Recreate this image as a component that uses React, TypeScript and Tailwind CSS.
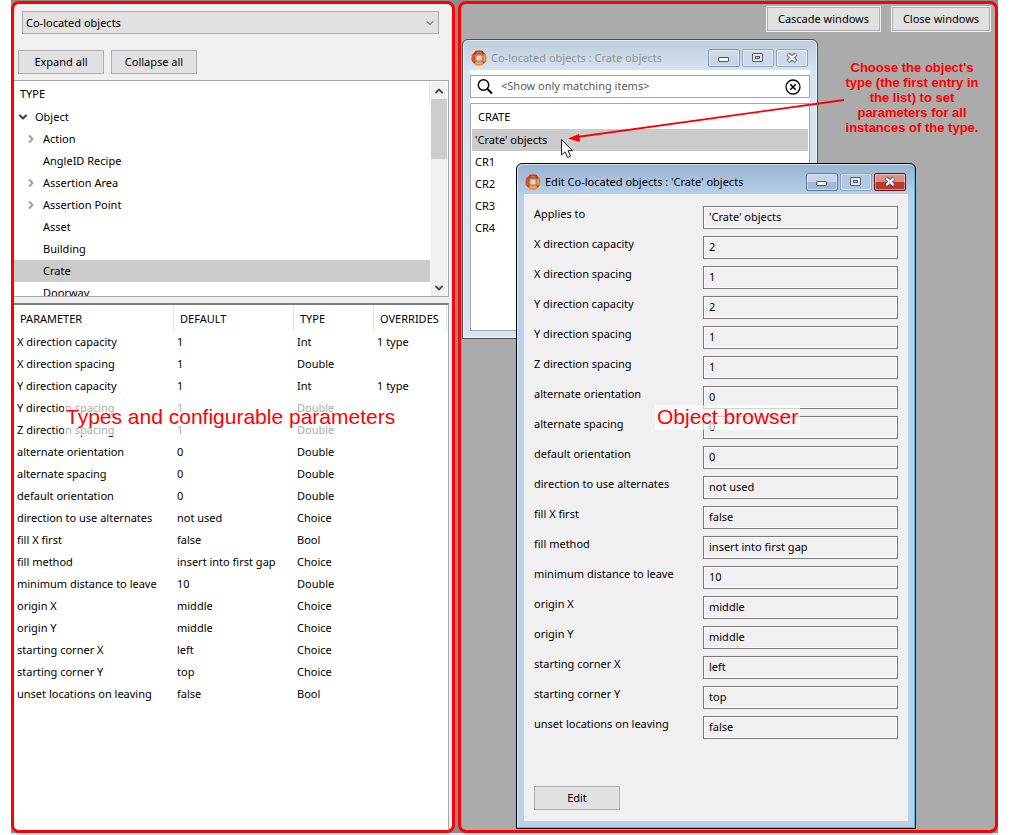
import React from 'react';
import { ChevronDown, ChevronRight, ChevronUp } from 'lucide-react';

interface TreeNode {
  name: string;
  expandable?: boolean;
  selected?: boolean;
}

interface Parameter {
  name: string;
  value: string;
  type: string;
  overrides?: string;
}

interface Field {
  label: string;
  value: string;
}

const TREE: TreeNode[] = [
  { name: 'Action', expandable: true },
  { name: 'AngleID Recipe' },
  { name: 'Assertion Area', expandable: true },
  { name: 'Assertion Point', expandable: true },
  { name: 'Asset' },
  { name: 'Building' },
  { name: 'Crate', selected: true },
  { name: 'Doorway' },
];

const PARAMETERS: Parameter[] = [
  { name: 'X direction capacity', value: '1', type: 'Int', overrides: '1 type' },
  { name: 'X direction spacing', value: '1', type: 'Double' },
  { name: 'Y direction capacity', value: '1', type: 'Int', overrides: '1 type' },
  { name: 'Y direction spacing', value: '1', type: 'Double' },
  { name: 'Z direction spacing', value: '1', type: 'Double' },
  { name: 'alternate orientation', value: '0', type: 'Double' },
  { name: 'alternate spacing', value: '0', type: 'Double' },
  { name: 'default orientation', value: '0', type: 'Double' },
  { name: 'direction to use alternates', value: 'not used', type: 'Choice' },
  { name: 'fill X first', value: 'false', type: 'Bool' },
  { name: 'fill method', value: 'insert into first gap', type: 'Choice' },
  { name: 'minimum distance to leave', value: '10', type: 'Double' },
  { name: 'origin X', value: 'middle', type: 'Choice' },
  { name: 'origin Y', value: 'middle', type: 'Choice' },
  { name: 'starting corner X', value: 'left', type: 'Choice' },
  { name: 'starting corner Y', value: 'top', type: 'Choice' },
  { name: 'unset locations on leaving', value: 'false', type: 'Bool' },
];

const FIELDS: Field[] = [
  { label: 'Applies to', value: "'Crate' objects" },
  { label: 'X direction capacity', value: '2' },
  { label: 'X direction spacing', value: '1' },
  { label: 'Y direction capacity', value: '2' },
  { label: 'Y direction spacing', value: '1' },
  { label: 'Z direction spacing', value: '1' },
  { label: 'alternate orientation', value: '0' },
  { label: 'alternate spacing', value: '0' },
  { label: 'default orientation', value: '0' },
  { label: 'direction to use alternates', value: 'not used' },
  { label: 'fill X first', value: 'false' },
  { label: 'fill method', value: 'insert into first gap' },
  { label: 'minimum distance to leave', value: '10' },
  { label: 'origin X', value: 'middle' },
  { label: 'origin Y', value: 'middle' },
  { label: 'starting corner X', value: 'left' },
  { label: 'starting corner Y', value: 'top' },
  { label: 'unset locations on leaving', value: 'false' },
];

const CRATES = ["'Crate' objects", 'CR1', 'CR2', 'CR3', 'CR4'];

function AppLogo() {
  return (
    <svg viewBox="0 0 16 16" className="size-4 shrink-0" fill="none" strokeLinecap="round" aria-hidden="true">
      <circle cx="8" cy="8" r="6" stroke="#a8421c" strokeWidth="2.6" />
      <path d="M2.600 5.800V10.200" stroke="#e0501a" strokeWidth="3.800" />
      <path d="M13.400 5.800V10.200" stroke="#ee7426" strokeWidth="3.800" />
      <path d="M5.600 2.500H10.400" stroke="#cf3a16" strokeWidth="3.800" />
      <path d="M5.600 13.500H10.400" stroke="#f08a22" strokeWidth="3.800" />
      <path d="M6 2.900H10" stroke="#f2703a" strokeWidth="1.200" />
      <path d="M6 13.400H10" stroke="#ffc25a" strokeWidth="1.400" />
      <path d="M13.200 6.200V9.800" stroke="#ffa04a" strokeWidth="1.200" />
      <rect x="5" y="5" width="6" height="6" fill="#c9d9ea" stroke="#8f5236" strokeWidth="0.6" />
    </svg>
  );
}

function CaptionButtons({ active }: { active?: boolean }) {
  const base = 'flex h-[18px] w-8 items-center justify-center rounded-xs border shadow-[inset_0_0_0_1px_rgba(255,255,255,0.45)]';
  const plain = active
    ? 'border-[#5f7896] bg-linear-to-b from-[#c3d5e8] from-50% to-[#9fb9d6] to-50%'
    : 'border-[#8096b0] bg-linear-to-b from-[#cfdcea] to-[#c3d3e5]';
  const dim = active
    ? 'border-[#8ba4c0] bg-[#b0c8e1]'
    : 'border-[#93a7be] bg-[#cddaea]';
  const close = active
    ? 'border-[#5a1420] bg-linear-to-b from-[#dc9186] from-50% to-[#bb3a26] to-50%'
    : 'border-[#93a7be] bg-[#cddaea]';

  return (
    <div className="mr-[2px] flex gap-[2px]">
      <button type="button" aria-label="Minimize" className={`${base} ${plain}`}>
        <svg viewBox="0 0 12 12" className="size-3" aria-hidden="true">
          <rect x="0.5" y="5.5" width="10" height="4" rx="0.5" fill="#f4f6f8" stroke="#55565f" />
        </svg>
      </button>
      <button type="button" aria-label="Maximize" className={`${base} ${dim}`}>
        <svg viewBox="0 0 12 12" className="size-3" aria-hidden="true">
          <rect x="0.5" y="1.5" width="10" height="8" rx="0.5" fill="#e4e8ee" stroke="#5b5f72" />
          <rect x="3.5" y="4.5" width="4" height="2" fill="#c3d3e5" stroke="#5b5f72" />
        </svg>
      </button>
      <button type="button" aria-label="Close" className={`${base} ${close}`}>
        <svg viewBox="0 0 12 12" className="size-3" aria-hidden="true">
          <path d="M2 2L10 9.5M10 2L2 9.5" stroke="#50536a" strokeWidth="4.4" />
          <path d="M2.3 2.3L9.7 9.2M9.7 2.3L2.3 9.2" stroke="#f6f6f8" strokeWidth="2.4" />
        </svg>
      </button>
    </div>
  );
}

function TypeTree() {
  return (
    <div className="mr-[3px] flex h-[217px] shrink-0 gap-px border-y border-r border-[#a7a6aa] bg-white pt-px pr-px">
      <div className="flex-1 overflow-hidden">
        <div className="flex h-6 items-center border-r border-[#e5e5e5] px-[6px]">TYPE</div>
        <ul>
          <li className="flex h-[22px] items-center gap-[6px] pl-[3px]">
            <ChevronDown className="size-3 text-[#404040]" strokeWidth={4} />
            Object
          </li>
          {TREE.map((node) => (
            <li
              key={node.name}
              className={`flex h-[22px] items-center gap-[6px] pl-[11px] ${node.selected ? 'bg-[#cbcbcb]' : ''}`}
            >
              {node.expandable ? (
                <ChevronRight className="size-3 text-[#a0a0a0]" strokeWidth={4} />
              ) : (
                <span className="w-3" />
              )}
              {node.name}
            </li>
          ))}
        </ul>
      </div>
      <div className="flex w-4 flex-col items-center bg-[#f0f0f0] text-[#505050]">
        <div className="flex h-[17px] items-center">
          <ChevronUp className="size-3" strokeWidth={4} />
        </div>
        <div className="h-[60px] w-full bg-[#cdcdcd]" />
        <div className="mt-auto flex h-[17px] items-center">
          <ChevronDown className="size-3" strokeWidth={4} />
        </div>
      </div>
    </div>
  );
}

function ParameterTable() {
  return (
    <div className="mt-[6px] mr-[3px] flex-1 border-t-2 border-r border-t-[#7c7c7c] border-r-[#a7a6aa] bg-white pt-px">
      <table className="w-[433px] table-fixed border-separate border-spacing-0 text-left">
        <colgroup>
          <col className="w-[160px]" />
          <col className="w-[120px]" />
          <col className="w-[80px]" />
          <col className="w-[73px]" />
        </colgroup>
        <thead>
          <tr className="h-[25px]">
            {['PARAMETER', 'DEFAULT', 'TYPE', 'OVERRIDES'].map((title) => (
              <th key={title} className="border-r border-[#e5e5e5] pl-[6px] font-normal">
                {title}
              </th>
            ))}
          </tr>
        </thead>
        <tbody>
          {PARAMETERS.map((p) => (
            <tr key={p.name} className="h-[22px] whitespace-nowrap">
              <td className="pl-[3px]">{p.name}</td>
              <td className="pl-[3px]">{p.value}</td>
              <td className="pl-[3px]">{p.type}</td>
              <td className="pl-[3px]">{p.overrides}</td>
            </tr>
          ))}
        </tbody>
      </table>
    </div>
  );
}

function TypesPanel() {
  const button = 'h-6 w-[86px] border border-[#adadad] bg-[#e1e1e1]';
  return (
    <section className="relative flex w-[444px] shrink-0 flex-col overflow-hidden rounded-lg border-3 border-[#ff0000] bg-[#f0f0f0]">
      <div className="relative mt-[7px] mr-[13px] ml-2">
        <select
          aria-label="Configuration"
          className="block h-[23px] w-full appearance-none border border-[#adadad] bg-[#e1e1e1] pl-[3px]"
        >
          <option>Co-located objects</option>
        </select>
        <ChevronDown
          className="pointer-events-none absolute top-[6px] right-[3px] size-3 text-[#404040]"
          strokeWidth={2}
        />
      </div>
      <div className="mt-4 mb-[6px] ml-1 flex gap-[7px]">
        <button type="button" className={button}>Expand all</button>
        <button type="button" className={button}>Collapse all</button>
      </div>
      <TypeTree />
      <ParameterTable />
      <div className="absolute top-[393px] left-[50px] bg-white/65 px-[2px] py-[7px] font-['Liberation_Sans',sans-serif] text-[21px] leading-[25px] whitespace-nowrap text-[#ff0000]">
        Types and configurable parameters
      </div>
    </section>
  );
}

function ObjectListWindow() {
  return (
    <div className="absolute top-[35px] left-px flex h-[300px] w-[356px] flex-col rounded-t-md border border-[#4c4c4c] bg-linear-to-b from-[#bfcddb] to-[#d7e4f2] to-[32px] px-[7px] pb-[7px] shadow-[inset_0_0_0_1px_rgba(255,255,255,0.6)]">
      <div className="flex h-[30px] items-center gap-1 pt-[6px] pl-px text-[#8e959e]">
        <AppLogo />
        <span className="flex-1">Co-located objects : Crate objects</span>
        <CaptionButtons />
      </div>
      <div className="flex flex-1 flex-col gap-[5px] bg-white pt-[5px]">
        <div className="flex h-[23px] items-center gap-2 border border-[#a7a6aa] pr-2 pl-[6px]">
          <svg viewBox="0 0 16 16" className="size-4 shrink-0" fill="none" stroke="#000" aria-hidden="true">
            <circle cx="6.5" cy="6" r="5.2" strokeWidth="1.5" />
            <path d="M10.5 10L15 14.5" strokeWidth="2" />
          </svg>
          <input
            aria-label="Show only matching items"
            placeholder="<Show only matching items>"
            className="min-w-0 flex-1 pb-px outline-none placeholder:text-[#5a5a5a]"
          />
          <button type="button" aria-label="Clear">
            <svg viewBox="0 0 16 16" className="block size-4" fill="none" stroke="#000" aria-hidden="true">
              <circle cx="8" cy="8" r="7" strokeWidth="1.3" />
              <path d="M5.3 5.3L10.7 10.7M10.7 5.3L5.3 10.7" strokeWidth="1.6" />
            </svg>
          </button>
        </div>
        <div className="flex-1 border border-[#a7a6aa] px-px pt-px">
          <div className="flex h-6 items-center px-[6px]">CRATE</div>
          <ul>
            {CRATES.map((name, i) => (
              <li
                key={name}
                className={`flex h-[22px] items-center px-[3px] ${i === 0 ? 'bg-[#cbcbcb]' : ''}`}
              >
                {name}
              </li>
            ))}
          </ul>
        </div>
      </div>
    </div>
  );
}

function EditWindow() {
  return (
    <div className="absolute top-[159px] left-[55px] flex h-[666px] w-[400px] flex-col rounded-t-md border border-black bg-linear-to-b from-[#98b3d0] to-[#b9d1ea] to-[32px] px-[7px] pb-[7px] shadow-[inset_-1px_-1px_0_#35c8ee,inset_1px_1px_0_rgba(255,255,255,0.6)]">
      <div className="flex h-[30px] items-center gap-1 pt-[6px] pl-px">
        <AppLogo />
        <span className="flex-1">Edit Co-located objects : 'Crate' objects</span>
        <CaptionButtons active />
      </div>
      <form className="flex flex-1 flex-col bg-[#f0f0f0] pt-3 pr-[10px] pb-[11px] pl-[10px]">
        <div className="flex flex-col gap-[7px]">
          {FIELDS.map((f, i) => (
            <div key={f.label} className="flex h-[23px] items-start">
              <label htmlFor={`field-${i}`} className="flex-1 leading-4">
                {f.label}
              </label>
              <input
                id={`field-${i}`}
                readOnly
                defaultValue={f.value}
                className="h-[23px] w-[195px] border border-[#7a7a7a] px-[5px] pb-[2px] shadow-[inset_0_0_0_1px_#fff] outline-none"
              />
            </div>
          ))}
        </div>
        <button type="button" className="mt-auto h-6 w-[86px] border border-[#adadad] bg-[#e1e1e1]">
          Edit
        </button>
      </form>
    </div>
  );
}

function ObjectBrowser() {
  const button = 'h-[26px] border border-[#f2f2f2] bg-[#e1e1e1] shadow-[inset_0_0_0_1px_#adadad]';
  return (
    <section className="relative min-w-0 flex-1 overflow-hidden rounded-lg border-3 border-[#ff0000] bg-[#ababab]">
      <div className="flex justify-end gap-[10px] pt-[2px] pr-1">
        <button type="button" className={`${button} w-[115px]`}>Cascade windows</button>
        <button type="button" className={`${button} w-[100px]`}>Close windows</button>
      </div>
      <ObjectListWindow />
      <EditWindow />

      {/* callout and its arrow */}
      <p className="absolute top-[56px] left-[380px] w-[142px] text-center font-['Liberation_Sans',sans-serif] text-[13px] leading-[15px] font-bold text-[#ff0000]">
        Choose the object's<br />type (the first entry in<br />the list) to set<br />parameters for all<br />instances of the type.
      </p>
      <svg
        viewBox="0 0 290 70"
        className="pointer-events-none absolute top-[92px] left-[96px] h-[70px] w-[290px]"
        aria-hidden="true"
      >
        <path d="M287 4L20 41" stroke="#ff0000" strokeWidth="1.8" />
        <path d="M11 42.5L22 38L23 46Z" fill="#ff0000" />
        <path d="M4.5 43.5V59L8 55.8L10.6 61.5L13.6 60.2L11 54.7H15.5Z" fill="#fff" stroke="#1a1a2a" />
      </svg>
      <div className="absolute top-[401px] left-[194px] bg-white/65 px-[2px] pb-[2px] font-['Liberation_Sans',sans-serif] text-[21px] leading-[23px] whitespace-nowrap text-[#ff0000]">
        Object browser
      </div>
    </section>
  );
}

export default function App() {
  return (
    <main className="flex min-h-screen flex-col bg-[#e6e6e6] font-['Noto_Sans',sans-serif] text-[11px] leading-4 text-black">
      <div className="flex flex-1 border-r-12 border-l-11 border-white pb-[2px]">
        <div className="flex flex-1 gap-[3px] bg-[#8c8c8c] pt-px">
          <TypesPanel />
          <ObjectBrowser />
        </div>
      </div>
    </main>
  );
}
